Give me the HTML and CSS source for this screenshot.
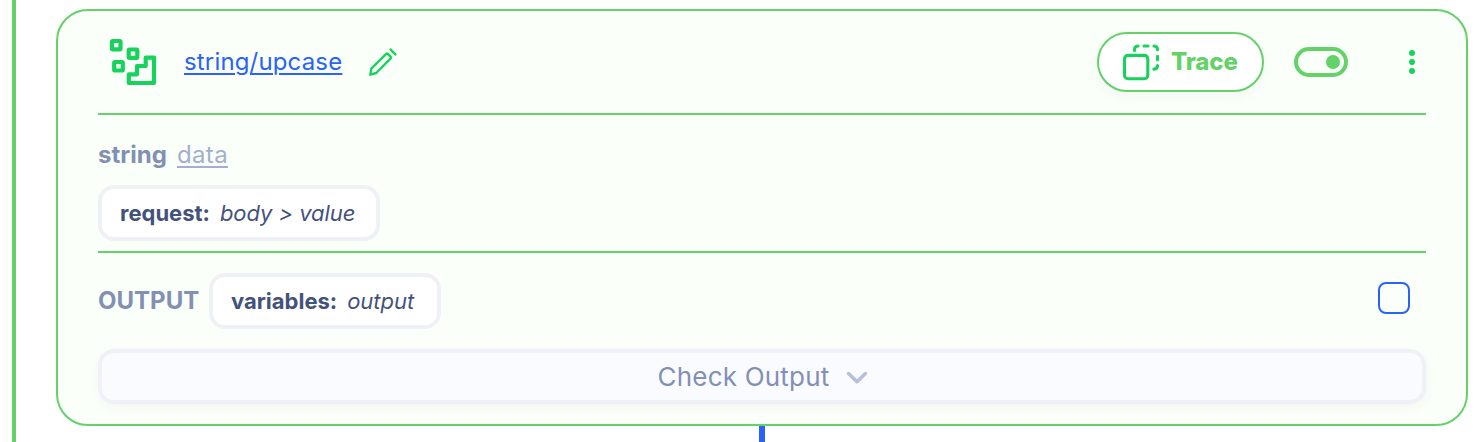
FILE: index.html
```
<!DOCTYPE html>
<html lang="en">
<head>
<meta charset="utf-8">
<title>string/upcase</title>
<link rel="stylesheet" href="styles.css">
</head>
<body>
<main class="flow">
  <div class="rail"></div>
  <div class="lane">
    <section class="card">
      <header class="head">
        <svg class="fn-icon" width="48" height="48" viewBox="109 38 48 48" fill="none" stroke="#18d35b" stroke-width="4.200" stroke-linejoin="round">
          <rect x="112" y="41" width="8.500" height="8.300" rx="0.800"/>
          <rect x="128.700" y="49.500" width="8.600" height="8.400" rx="0.800"/>
          <rect x="114.200" y="62" width="8.600" height="8.500" rx="0.800"/>
          <path d="M128.800 74.300h8.200V66h8.700v-8.300h8.300V83h-25.200z"/>
        </svg>
        <a class="title">string/upcase</a>
        <svg class="pencil" width="30" height="30" viewBox="368 47 30 30" fill="none" stroke="#18d35b" stroke-width="2.400" stroke-linejoin="round">
          <path d="M370.300 74.600l1-6L386.200 53.900q.8-.8 1.600 0l2.900 2.900q.8.800 0 1.600L376.200 73z"/>
          <path d="M389.900 48.900l6.200 6.200"/>
        </svg>
        <button class="trace">
          <svg width="38" height="38" viewBox="1122 43.500 38 38" fill="none" stroke="#18d35b" stroke-width="3.100" stroke-linecap="round">
            <rect x="1124.500" y="55.900" width="23.300" height="23.300" rx="3.500"/>
            <path d="M1134.500 51v-.8q0-3.500 3.500-3.700M1144 46.500h4M1154 46.500q3.500.2 3.500 3.800M1157.500 56.700v3.500M1157.500 66q0 3.300-3.700 3.700"/>
          </svg>
          <span>Trace</span>
        </button>
        <span class="toggle"><i></i></span>
        <span class="more"><i></i><i></i><i></i></span>
      </header>
      <div class="param"><b>string</b><a>data</a></div>
      <div class="values"><div class="chip chip-request"><b>request:</b><em>body &gt; value</em></div></div>
      <div class="output">
        <b>OUTPUT</b>
        <div class="chip chip-output"><b>variables:</b><em>output</em></div>
        <span class="check"></span>
      </div>
      <button class="result">
        <span>Check Output</span>
        <svg width="22" height="14" viewBox="0 0 22 14" fill="none" stroke="#b5bfda" stroke-width="3.400" stroke-linecap="round" stroke-linejoin="round"><path d="M2.500 2.500l8.500 8.300 8.500-8.300"/></svg>
      </button>
    </section>
    <div class="connector"></div>
  </div>
</main>
</body>
</html>
```
FILE: styles.css
```
* { box-sizing: border-box; }
body { margin: 0; background: #fff; font-family: Inter, sans-serif; overflow: hidden; }
button { font: inherit; padding: 0; }
svg { display: block; flex: none; }
.flow { display: flex; height: 442px; padding-left: 12px; }
.rail { width: 4px; background: #64d169; }
.lane { display: flex; flex-direction: column; align-items: center; margin-left: 40px; padding-top: 9px; }
.card { width: 1412px; height: 417px; flex: none; border: 2px solid #64d169; border-radius: 32px; background: #fafff9; padding: 0 40px; }
.head { display: flex; align-items: center; height: 104px; border-bottom: 2px solid #64d169; }
.fn-icon { margin-left: 11px; }
.title { margin-left: 27px; width: 158px; font-size: 24px; line-height: 30px; letter-spacing: .16px; white-space: nowrap; color: #2b63f7; text-decoration: underline; text-decoration-thickness: 2px; text-underline-offset: 3px; }
.pencil { margin-left: 26px; }
.trace { display: flex; align-items: center; width: 167px; height: 60px; margin-left: auto; padding-left: 23px; border: 2px solid #64d169; border-radius: 30px; background: #fff; color: #64d169; font-size: 24px; font-weight: 800; letter-spacing: -.1px; box-shadow: 0 4px 12px rgba(60, 90, 60, .04); }
.trace span { margin-left: 11px; padding-bottom: 1px; }
.toggle { display: flex; align-items: center; justify-content: flex-end; width: 54px; height: 30px; margin-left: 30px; padding-right: 4px; border: 4px solid #64d169; border-radius: 15px; }
.toggle i { width: 14px; height: 14px; border-radius: 50%; background: #64d169; }
.more { display: flex; flex-direction: column; gap: 3px; margin: 0 11px 0 61px; }
.more i { width: 6px; height: 6px; border-radius: 50%; background: #18d35b; }
.param { display: flex; height: 70px; padding-top: 25px; font-size: 24px; line-height: 30px; color: #8290b4; }
.param b, .output > b { font-weight: 700; }
.param b { width: 79px; }
.param a { letter-spacing: .35px; color: #a4afcd; text-decoration: underline; text-decoration-thickness: 2px; text-underline-offset: 3px; }
.values { height: 68px; border-bottom: 2px solid #64d169; }
.chip { display: flex; align-items: center; height: 56px; padding-left: 18px; border: 4px solid #f0f1f7; border-radius: 16px; background: #fff; color: #43527d; font-size: 22px; white-space: nowrap; }
.chip b { font-weight: 700; }
.chip em { margin-left: 10px; letter-spacing: -.05px; }
.chip-request { width: 282px; }
.chip-output { width: 232px; }
.output { display: flex; align-items: center; height: 96px; font-size: 24px; color: #8290b4; }
.output > b { width: 111px; padding-bottom: 2px; }
.check { width: 32px; height: 32px; margin: 0 16px 6px auto; border: 2px solid #2b63f7; border-radius: 8px; }
.result { display: flex; align-items: center; justify-content: center; gap: 17px; width: 100%; height: 55px; padding-left: 2px; border: 4px solid #f0f1f6; border-radius: 16px; background: #fafbfe; color: #8290b4; font-size: 26px; letter-spacing: .2px; box-shadow: 0 4px 12px rgba(60, 90, 60, .04); }
.result span { padding-bottom: 1px; }
.result svg { margin-top: 2px; }
.connector { width: 6px; flex: 1; background: #2b63f7; }
```
